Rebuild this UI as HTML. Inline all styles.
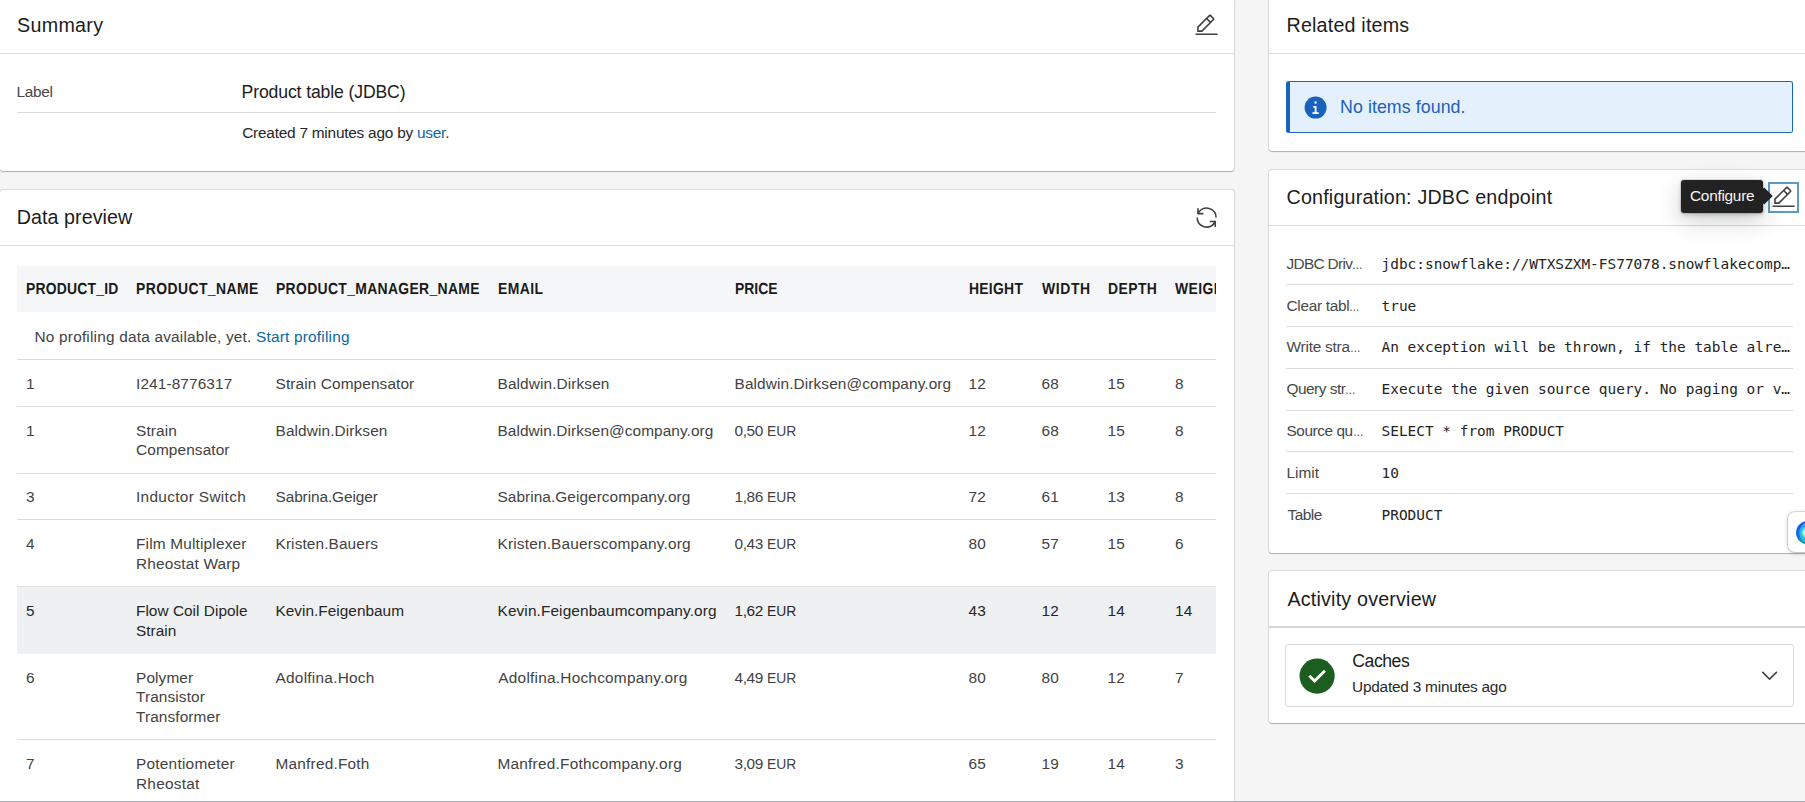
<!DOCTYPE html>
<html lang="en">
<head>
<meta charset="utf-8">
<title>Product table (JDBC)</title>
<style>
html,body{margin:0;padding:0;}
body{width:1805px;height:802px;overflow:hidden;position:relative;background:#f5f5f5;
  font-family:"Liberation Sans",sans-serif;color:#262626;font-size:15.4px;}
.card{position:absolute;background:#fff;border-radius:3px;
  box-shadow:0 0 0 1px rgba(0,0,0,.10),0 1px 1px rgba(0,0,0,.2);}
.t{position:absolute;white-space:nowrap;line-height:20px;margin:0;font-weight:normal;}
.h{font-size:19.7px;color:#1c1c1c;line-height:24px;letter-spacing:.19px;}
.hr{position:absolute;height:1px;background:#dcdcdc;}
.th{text-rendering:geometricPrecision;font-weight:bold;color:#1a1a1a;font-size:16px;letter-spacing:0;transform:scaleX(.87);transform-origin:0 50%;}
.td{color:#424242;letter-spacing:.11px;line-height:19.5px;}
a{color:#0a67a3;text-decoration:none;}
.mono{font-family:"DejaVu Sans Mono","Liberation Mono",monospace;font-size:14.45px;color:#232323;}
.lbl{color:#484848;}
.hov .td{color:#262626;}
.eur{display:inline-block;transform:scaleX(.9);transform-origin:0 50%;letter-spacing:0;margin-left:.5px;}
.el{display:inline-block;transform:scaleX(.69);transform-origin:0 50%;margin-right:-4.8px;}
svg{position:absolute;display:block;}
</style>
</head>
<body>

<!-- ================= LEFT COLUMN ================= -->
<section class="card" id="card-summary" style="left:0;top:-3px;width:1234px;height:174px;">
</section>
<h2 class="t h" id="t-summary" style="left:17px;top:13px;letter-spacing:0.3px;">Summary</h2>
<svg id="ic-edit1" style="left:1193.80px;top:13.00px;" width="25.2" height="25.2" viewBox="0 0 32 32" fill="#404040"><path d="M2 26h28v2H2zM25.4 9c.8-.8.8-2 0-2.8l-3.6-3.6c-.8-.8-2-.8-2.8 0l-15 15V24h6.4l15-15zm-5-5L24 7.6l-3 3L17.400 7l3-3zM6 22v-3.600l10-10 3.600 3.600-10 10H6z"/></svg>
<div class="hr" style="left:0;top:53px;width:1234px;"></div>
<div class="t lbl" id="t-label" style="left:16.5px;top:81.8px;letter-spacing:-0.325px;">Label</div>
<div class="t" id="t-ptitle" style="left:241.6px;top:80.9px;letter-spacing:-.12px;font-size:17.6px;color:#1c1c1c;line-height:22px;">Product table (JDBC)</div>
<div class="hr" style="left:17px;top:111.5px;width:1199px;"></div>
<div class="t" id="t-created" style="left:242.2px;top:123.3px;letter-spacing:-0.229px;">Created 7 minutes ago by <a href="#">user</a>.</div>

<section class="card" id="card-preview" style="left:0;top:190px;width:1234px;height:640px;">
</section>
<h2 class="t h" id="t-preview" style="left:16.8px;top:205px;letter-spacing:.04px;">Data preview</h2>
<svg id="ic-renew" style="left:1193.75px;top:204.75px;" width="25.2" height="25.2" viewBox="0 0 32 32" fill="#404040"><path d="M12 10H6.780A11 11 0 0127 16h2A13 13 0 006 7.680V4H4v8h8zM20 22h5.220A11 11 0 015 16H3a13 13 0 0023 8.320V28h2v-8h-8z"/></svg>
<div class="hr" style="left:0;top:245px;width:1234px;"></div>

<div id="tbl" style="position:absolute;left:17px;top:266px;width:1199px;height:536px;overflow:hidden;">
  <div style="position:absolute;left:0;top:0;width:1199px;height:45.5px;background:#f5f6f7;"></div>
  <div style="position:absolute;left:0;top:320.4px;width:1199px;height:67.6px;background:#eff0f2;border-top:1px solid #e2e3e5;box-sizing:border-box;"></div>
  <div class="thead">
    <div class="t th" id="h0" style="left:9px;top:13.5px;letter-spacing:0.233px;">PRODUCT_ID</div>
    <div class="t th" id="h1" style="left:119px;top:13.5px;letter-spacing:0.5px;">PRODUCT_NAME</div>
    <div class="t th" id="h2" style="left:258.5px;top:13.5px;letter-spacing:0.384px;">PRODUCT_MANAGER_NAME</div>
    <div class="t th" id="h3" style="left:480.5px;top:13.5px;letter-spacing:0.5px;">EMAIL</div>
    <div class="t th" id="h4" style="left:717.5px;top:13.5px;letter-spacing:0.000px;">PRICE</div>
    <div class="t th" id="h5" style="left:951.5px;top:13.5px;letter-spacing:0.300px;">HEIGHT</div>
    <div class="t th" id="h6" style="left:1024.5px;top:13.5px;letter-spacing:0.700px;">WIDTH</div>
    <div class="t th" id="h7" style="left:1090.5px;top:13.5px;letter-spacing:0.5px;">DEPTH</div>
    <div class="t th" id="h8" style="left:1158px;top:13.5px;letter-spacing:0.5px;">WEIGHT</div>
  </div>
  <div class="t td" id="prof" style="left:17.5px;top:60.9px;letter-spacing:0.200px;">No profiling data available, yet. <a href="#">Start profiling</a></div>
  <div class="hr" style="left:0;top:93.2px;width:1199px;"></div>
  <div class="hr" style="left:0;top:140.4px;width:1199px;"></div>
  <div class="hr" style="left:0;top:207.4px;width:1199px;"></div>
  <div class="hr" style="left:0;top:253.2px;width:1199px;"></div>
  <div class="hr" style="left:0;top:473px;width:1199px;"></div>
  <div class="tr">
    <div class="t td" id="r0c0" style="left:9px;top:107.9px;">1</div>
    <div class="t td" id="r0c1" style="left:119px;top:107.9px;">I241-8776317</div>
    <div class="t td" id="r0c2" style="left:258.5px;top:107.9px;">Strain Compensator</div>
    <div class="t td" id="r0c3" style="left:480.5px;top:107.9px;">Baldwin.Dirksen</div>
    <div class="t td" id="r0c4" style="left:717.5px;top:107.9px;">Baldwin.Dirksen@company.org</div>
    <div class="t td" id="r0c5" style="left:951.5px;top:107.9px;">12</div>
    <div class="t td" id="r0c6" style="left:1024.5px;top:107.9px;">68</div>
    <div class="t td" id="r0c7" style="left:1090.5px;top:107.9px;">15</div>
    <div class="t td" id="r0c8" style="left:1158px;top:107.9px;">8</div>
  </div>
  <div class="tr">
    <div class="t td" id="r1c0" style="left:9px;top:154.5px;">1</div>
    <div class="t td" id="r1c1" style="left:119px;top:154.5px;">Strain<br>Compensator</div>
    <div class="t td" id="r1c2" style="left:258.5px;top:154.5px;">Baldwin.Dirksen</div>
    <div class="t td" id="r1c3" style="left:480.5px;top:154.5px;letter-spacing:0.079px;">Baldwin.Dirksen@company.org</div>
    <div class="t td" id="r1c4" style="left:717.5px;top:154.5px;letter-spacing:-0.4px;">0,50 <span class="eur">EUR</span></div>
    <div class="t td" id="r1c5" style="left:951.5px;top:154.5px;">12</div>
    <div class="t td" id="r1c6" style="left:1024.5px;top:154.5px;">68</div>
    <div class="t td" id="r1c7" style="left:1090.5px;top:154.5px;">15</div>
    <div class="t td" id="r1c8" style="left:1158px;top:154.5px;">8</div>
  </div>
  <div class="tr">
    <div class="t td" id="r2c0" style="left:9px;top:220.9px;">3</div>
    <div class="t td" id="r2c1" style="left:119px;top:220.9px;letter-spacing:0.324px;">Inductor Switch</div>
    <div class="t td" id="r2c2" style="left:258.5px;top:220.9px;letter-spacing:-0.090px;">Sabrina.Geiger</div>
    <div class="t td" id="r2c3" style="left:480.5px;top:220.9px;letter-spacing:0.060px;">Sabrina.Geigercompany.org</div>
    <div class="t td" id="r2c4" style="left:717.5px;top:220.9px;letter-spacing:-0.4px;">1,86 <span class="eur">EUR</span></div>
    <div class="t td" id="r2c5" style="left:951.5px;top:220.9px;">72</div>
    <div class="t td" id="r2c6" style="left:1024.5px;top:220.9px;">61</div>
    <div class="t td" id="r2c7" style="left:1090.5px;top:220.9px;">13</div>
    <div class="t td" id="r2c8" style="left:1158px;top:220.9px;">8</div>
  </div>
  <div class="tr">
    <div class="t td" id="r3c0" style="left:9px;top:268.2px;">4</div>
    <div class="t td" id="r3c1" style="left:119px;top:268.2px;letter-spacing:0.174px;">Film Multiplexer<br>Rheostat Warp</div>
    <div class="t td" id="r3c2" style="left:258.5px;top:268.2px;">Kristen.Bauers</div>
    <div class="t td" id="r3c3" style="left:480.5px;top:268.2px;letter-spacing:0.177px;">Kristen.Bauerscompany.org</div>
    <div class="t td" id="r3c4" style="left:717.5px;top:268.2px;letter-spacing:-0.4px;">0,43 <span class="eur">EUR</span></div>
    <div class="t td" id="r3c5" style="left:951.5px;top:268.2px;">80</div>
    <div class="t td" id="r3c6" style="left:1024.5px;top:268.2px;">57</div>
    <div class="t td" id="r3c7" style="left:1090.5px;top:268.2px;">15</div>
    <div class="t td" id="r3c8" style="left:1158px;top:268.2px;">6</div>
  </div>
  <div class="tr hov">
    <div class="t td" id="r4c0" style="left:9px;top:335.2px;">5</div>
    <div class="t td" id="r4c1" style="left:119px;top:335.2px;letter-spacing:0.024px;">Flow Coil Dipole<br>Strain</div>
    <div class="t td" id="r4c2" style="left:258.5px;top:335.2px;letter-spacing:0.010px;">Kevin.Feigenbaum</div>
    <div class="t td" id="r4c3" style="left:480.5px;top:335.2px;">Kevin.Feigenbaumcompany.org</div>
    <div class="t td" id="r4c4" style="left:717.5px;top:335.2px;letter-spacing:-0.4px;">1,62 <span class="eur">EUR</span></div>
    <div class="t td" id="r4c5" style="left:951.5px;top:335.2px;">43</div>
    <div class="t td" id="r4c6" style="left:1024.5px;top:335.2px;">12</div>
    <div class="t td" id="r4c7" style="left:1090.5px;top:335.2px;">14</div>
    <div class="t td" id="r4c8" style="left:1158px;top:335.2px;">14</div>
  </div>
  <div class="tr">
    <div class="t td" id="r5c0" style="left:9px;top:401.5px;">6</div>
    <div class="t td" id="r5c1" style="left:119px;top:401.5px;">Polymer<br>Transistor<br>Transformer</div>
    <div class="t td" id="r5c2" style="left:258.5px;top:401.5px;letter-spacing:0.252px;">Adolfina.Hoch</div>
    <div class="t td" id="r5c3" style="left:481.3px;top:401.5px;letter-spacing:0.232px;">Adolfina.Hochcompany.org</div>
    <div class="t td" id="r5c4" style="left:717.5px;top:401.5px;letter-spacing:-0.4px;">4,49 <span class="eur">EUR</span></div>
    <div class="t td" id="r5c5" style="left:951.5px;top:401.5px;">80</div>
    <div class="t td" id="r5c6" style="left:1024.5px;top:401.5px;">80</div>
    <div class="t td" id="r5c7" style="left:1090.5px;top:401.5px;">12</div>
    <div class="t td" id="r5c8" style="left:1158px;top:401.5px;">7</div>
  </div>
  <div class="tr">
    <div class="t td" id="r6c0" style="left:9px;top:488.2px;">7</div>
    <div class="t td" id="r6c1" style="left:119px;top:488.2px;letter-spacing:0.240px;">Potentiometer<br>Rheostat</div>
    <div class="t td" id="r6c2" style="left:258.5px;top:488.2px;letter-spacing:0.215px;">Manfred.Foth</div>
    <div class="t td" id="r6c3" style="left:480.5px;top:488.2px;letter-spacing:0.224px;">Manfred.Fothcompany.org</div>
    <div class="t td" id="r6c4" style="left:717.5px;top:488.2px;letter-spacing:-0.4px;">3,09 <span class="eur">EUR</span></div>
    <div class="t td" id="r6c5" style="left:951.5px;top:488.2px;">65</div>
    <div class="t td" id="r6c6" style="left:1024.5px;top:488.2px;">19</div>
    <div class="t td" id="r6c7" style="left:1090.5px;top:488.2px;">14</div>
    <div class="t td" id="r6c8" style="left:1158px;top:488.2px;">3</div>
  </div>
</div>

<!-- ================= RIGHT COLUMN ================= -->
<section class="card" id="card-related" style="left:1269px;top:-3px;width:560px;height:154px;"></section>
<section class="card" id="card-config" style="left:1269px;top:170px;width:560px;height:383px;"></section>
<section class="card" id="card-activity" style="left:1269px;top:571px;width:560px;height:152px;"></section>


<h2 class="t h" id="t-related" style="left:1286.5px;top:13px;">Related items</h2>
<div class="hr" style="left:1269px;top:53px;width:540px;"></div>
<div id="note" style="position:absolute;left:1286px;top:81px;width:507px;height:51.5px;box-sizing:border-box;background:#e4f1fc;border:1px solid #1a66c2;border-left:4.2px solid #1763c0;border-radius:2.5px;"></div>
<svg id="ic-info" style="left:1303.00px;top:94.90px;" width="25.2" height="25.2" viewBox="0 0 32 32"><circle cx="16" cy="16" r="14" fill="#1862be"/><path fill="#fff" d="M16 8a1.500 1.500 0 1 1-1.500 1.500A1.500 1.500 0 0 1 16 8zm4 16.125h-8v-2.250h2.875v-5.750H13v-2.250h4.125v8H20z"/></svg>
<div class="t" id="t-noitems" style="left:1340px;top:95px;letter-spacing:.07px;font-size:17.8px;line-height:24px;color:#1c5fb8;">No items found.</div>

<h2 class="t h" id="t-config" style="left:1286.5px;top:185px;">Configuration: JDBC endpoint</h2>
<div class="hr" style="left:1269px;top:225px;width:540px;"></div>
<div class="t lbl" id="cl0" style="left:1286.5px;top:253.9px;letter-spacing:-0.68px;">JDBC Driv<span class="el">…</span></div>
<div class="t mono" id="cv0" style="left:1381.5px;top:253.9px;">jdbc:snowflake://WTXSZXM-FS77078.snowflakecomp…</div>
<div class="t lbl" id="cl1" style="left:1286.5px;top:295.7px;letter-spacing:-0.3px;">Clear tabl<span class="el">…</span></div>
<div class="t mono" id="cv1" style="left:1381.5px;top:295.7px;">true</div>
<div class="t lbl" id="cl2" style="left:1286.5px;top:337.4px;letter-spacing:-0.22px;">Write stra<span class="el">…</span></div>
<div class="t mono" id="cv2" style="left:1381.5px;top:337.4px;">An exception will be thrown, if the table alre…</div>
<div class="t lbl" id="cl3" style="left:1286.5px;top:379.2px;letter-spacing:-0.5px;">Query str<span class="el">…</span></div>
<div class="t mono" id="cv3" style="left:1381.5px;top:379.2px;">Execute the given source query. No paging or v…</div>
<div class="t lbl" id="cl4" style="left:1286.5px;top:420.9px;letter-spacing:-0.45px;">Source qu<span class="el">…</span></div>
<div class="t mono" id="cv4" style="left:1381.5px;top:420.9px;">SELECT * from PRODUCT</div>
<div class="t lbl" id="cl5" style="left:1286.5px;top:462.7px;">Limit</div>
<div class="t mono" id="cv5" style="left:1381.5px;top:462.7px;">10</div>
<div class="t lbl" id="cl6" style="left:1287.5px;top:504.5px;letter-spacing:-0.500px;">Table</div>
<div class="t mono" id="cv6" style="left:1381.5px;top:504.5px;">PRODUCT</div>
<div class="hr" style="left:1286px;top:284.4px;width:507px;"></div>
<div class="hr" style="left:1286px;top:326.2px;width:507px;"></div>
<div class="hr" style="left:1286px;top:368px;width:507px;"></div>
<div class="hr" style="left:1286px;top:409.8px;width:507px;"></div>
<div class="hr" style="left:1286px;top:451px;width:507px;"></div>
<div class="hr" style="left:1286px;top:493.4px;width:507px;"></div>

<div id="focusbox" style="position:absolute;left:1768px;top:182px;width:31px;height:31px;box-sizing:border-box;border:2px solid #5d9bc6;background:#fff;"></div>
<svg id="ic-edit2" style="left:1771.15px;top:184.80px;" width="25.2" height="25.2" viewBox="0 0 32 32" fill="#404040"><path d="M2 26h28v2H2zM25.400 9c.8-.8.8-2 0-2.800l-3.600-3.600c-.8-.8-2-.8-2.800 0l-15 15V24h6.400l15-15zm-5-5L24 7.600l-3 3L17.400 7l3-3zM6 22v-3.600l10-10 3.600 3.600-10 10H6z"/></svg>

<div id="tooltip" style="position:absolute;left:1681px;top:180px;width:81.5px;height:33px;background:#222;border-radius:3px;box-shadow:0 0 0 1px rgba(16,22,26,.1),0 2px 4px rgba(16,22,26,.2),0 8px 24px rgba(16,22,26,.2);"></div>
<div id="tt-arrow" style="position:absolute;left:1757.8px;top:189.8px;width:12.4px;height:12.4px;background:#222;transform:rotate(45deg);"></div>
<div class="t" id="t-tooltip" style="left:1690px;top:185.8px;color:#f5f5f5;font-size:15.4px;letter-spacing:-.27px;">Configure</div>
<div id="float" style="position:absolute;left:1788px;top:511.6px;width:40px;height:40px;background:#fff;border-radius:7px;box-shadow:0 0 0 1px rgba(0,0,0,.10),0 1px 5px rgba(0,0,0,.22);"></div>
<svg id="float-ic" style="left:1796px;top:520.75px;" width="23.5" height="23.5" viewBox="0 0 23.5 23.5"><defs><linearGradient id="fg1" x1="0" y1="0" x2="0" y2="1"><stop offset="0" stop-color="#0c5cf0"/><stop offset=".6" stop-color="#1568e2"/><stop offset="1" stop-color="#12b0a6"/></linearGradient><linearGradient id="fg2" x1="0" y1="0" x2="0" y2="1"><stop offset="0" stop-color="#38a6f2"/><stop offset=".6" stop-color="#2fb4e4"/><stop offset="1" stop-color="#1fc4b8"/></linearGradient><clipPath id="fclip"><circle cx="11.75" cy="11.75" r="11.75"/></clipPath></defs><g clip-path="url(#fclip)"><rect width="23.5" height="23.5" fill="url(#fg1)"/><circle cx="14.400" cy="11.750" r="11.100" fill="url(#fg2)"/><circle cx="11.200" cy="11.750" r="5.640" fill="#52ecde"/><circle cx="10.100" cy="11.750" r="2.840" fill="#fff"/></g></svg>

<h2 class="t h" id="t-activity" style="left:1287.5px;top:587px;letter-spacing:0.190px;">Activity overview</h2>
<div class="hr" style="left:1269px;top:626px;width:540px;height:1.5px;background:#d6d6d6;"></div>
<div id="actbox" style="position:absolute;left:1285px;top:644.400px;width:508.500px;height:62.200px;box-sizing:border-box;border:1px solid #dadada;border-radius:3px;background:#fff;"></div>
<svg id="ic-ok" style="left:1296.9px;top:655.65px;" width="40.2" height="40.2" viewBox="0 0 32 32"><circle cx="16" cy="16" r="14" fill="#1b5e20"/><path fill="#fff" d="M14 21.591l-5-5L10.591 15 14 18.409 21.410 11l1.595 1.585z"/></svg>
<div class="t" id="t-caches" style="left:1352.3px;top:648.5px;letter-spacing:-.45px;font-size:17.6px;line-height:24px;color:#1c1c1c;">Caches</div>
<div class="t" id="t-updated" style="left:1352px;top:677px;color:#2a2a2a;letter-spacing:-0.220px;">Updated 3 minutes ago</div>
<svg id="ic-chev" style="left:1756.90px;top:662.70px;" width="25.2" height="25.2" viewBox="0 0 32 32" fill="#404040"><path d="M16 22L6 12l1.400-1.400 8.600 8.600 8.600-8.600L26 12z"/></svg>

<div id="bottomline" style="position:absolute;left:0;top:801px;width:1805px;height:1px;background:#a4b0b5;"></div>
</body>
</html>
